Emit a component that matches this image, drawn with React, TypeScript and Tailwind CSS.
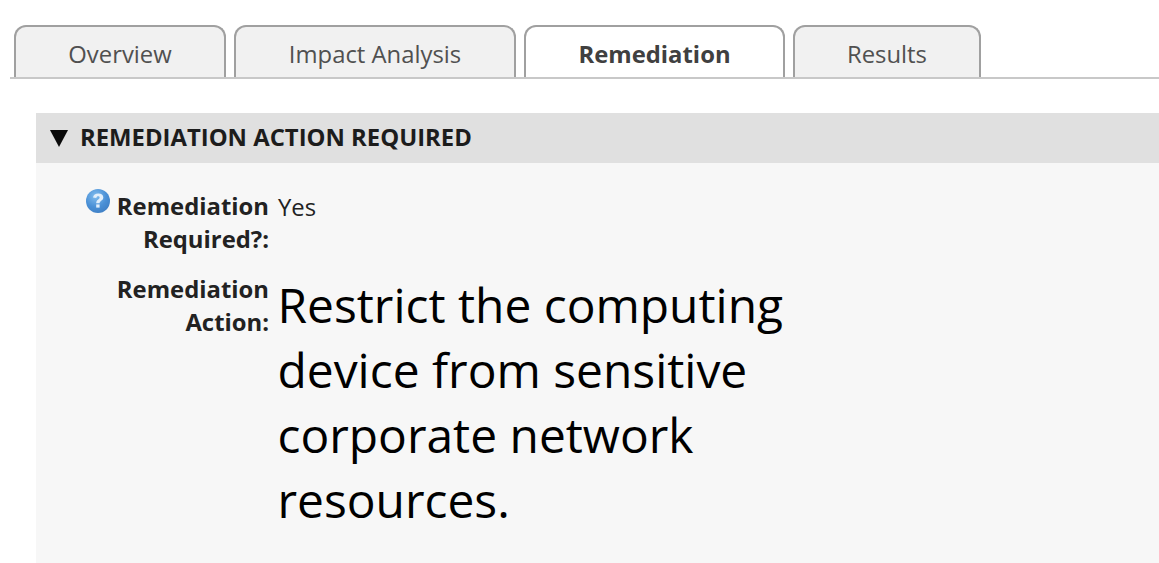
import React from "react";

const tabs = [
  { name: "Overview", width: "w-[212px]", active: false },
  { name: "Impact Analysis", width: "w-[282px]", active: false },
  { name: "Remediation", width: "w-[261px]", active: true },
  { name: "Results", width: "w-[188px]", active: false },
];

const HelpIcon = () => (
  <svg width="24" height="24" viewBox="0 0 24 24" className="absolute left-[-31px] top-[-1px] blur-[0.4px]">
    <defs>
      <radialGradient id="help" cx="40%" cy="30%" r="75%">
        <stop offset="0%" stopColor="#82bdee" />
        <stop offset="60%" stopColor="#4a90d6" />
        <stop offset="100%" stopColor="#3f7fc4" />
      </radialGradient>
    </defs>
    <circle cx="12" cy="12" r="12" fill="url(#help)" />
    <path
      d="M7 8.6C7.4 5.9 9.5 4.6 12.3 4.6c3 0 5 1.5 5 3.8 0 3.2-3.6 3.2-3.7 5.8H10.2c0-3.6 3.4-3.7 3.4-5.6 0-.9-.6-1.4-1.5-1.4-1 0-1.6.6-1.8 1.9z"
      fill="#e2effb"
    />
    <rect x="10.2" y="15.4" width="3.4" height="3.2" fill="#e2effb" />
  </svg>
);

const App = () => {
  return (
    <div className="w-[1159px] h-[563px] overflow-hidden bg-white font-['Open_Sans',sans-serif]">
      <div className="h-[25px]" />
      <div className="ml-[10px] flex gap-2 pl-1 h-[54px] border-b-2 border-[#c8c8c8]">
        {tabs.map((t) => (
          <div
            key={t.name}
            className={
              t.active
                ? `${t.width} h-[52px] flex items-center justify-center pt-[5px] rounded-t-[12px] border-2 border-b-0 border-[#a0a0a0] bg-white text-[23.85px] font-bold text-[#404040]`
                : `${t.width} h-[52px] flex items-center justify-center pt-[5px] rounded-t-[12px] border-2 border-b-0 border-[#a0a0a0] bg-[#f1f1f1] text-[23.85px] text-[#505050]`
            }
          >
            {t.name}
          </div>
        ))}
      </div>
      <div className="ml-[36px] mt-[34px] h-[450px] bg-[#f7f7f7]">
        <div className="h-[50px] bg-[#e0e0e0] flex items-center pl-[13px] gap-[11px]">
          <svg width="20" height="18" viewBox="0 0 20 18" className="blur-[0.5px]">
            <polygon points="1,1 19,1 10,18" fill="#0a0a0a" />
          </svg>
          <span className="text-[23.85px] font-bold text-[#1c1c1c]">REMEDIATION ACTION REQUIRED</span>
        </div>
        <div className="pt-[27px] text-[23.85px] leading-[33px]">
          <div className="flex">
            <div className="w-[233px] shrink-0 text-right font-bold text-[#222]">
              <span className="relative inline-block">
                <HelpIcon />
                Remediation
              </span>
              <br />
              Required?:
            </div>
            <div className="ml-[9px] mt-[1px] text-[#222]">Yes</div>
          </div>
          <div className="flex mt-[17px]">
            <div className="w-[233px] shrink-0 text-right font-bold text-[#222]">
              Remediation
              <br />
              Action:
            </div>
            <div className="ml-[8.5px] mt-[-1px] w-[540px] text-[47.9px] leading-[65px] text-black">
              Restrict the computing device from sensitive corporate network resources.
            </div>
          </div>
        </div>
      </div>
    </div>
  );
};

export default App;
